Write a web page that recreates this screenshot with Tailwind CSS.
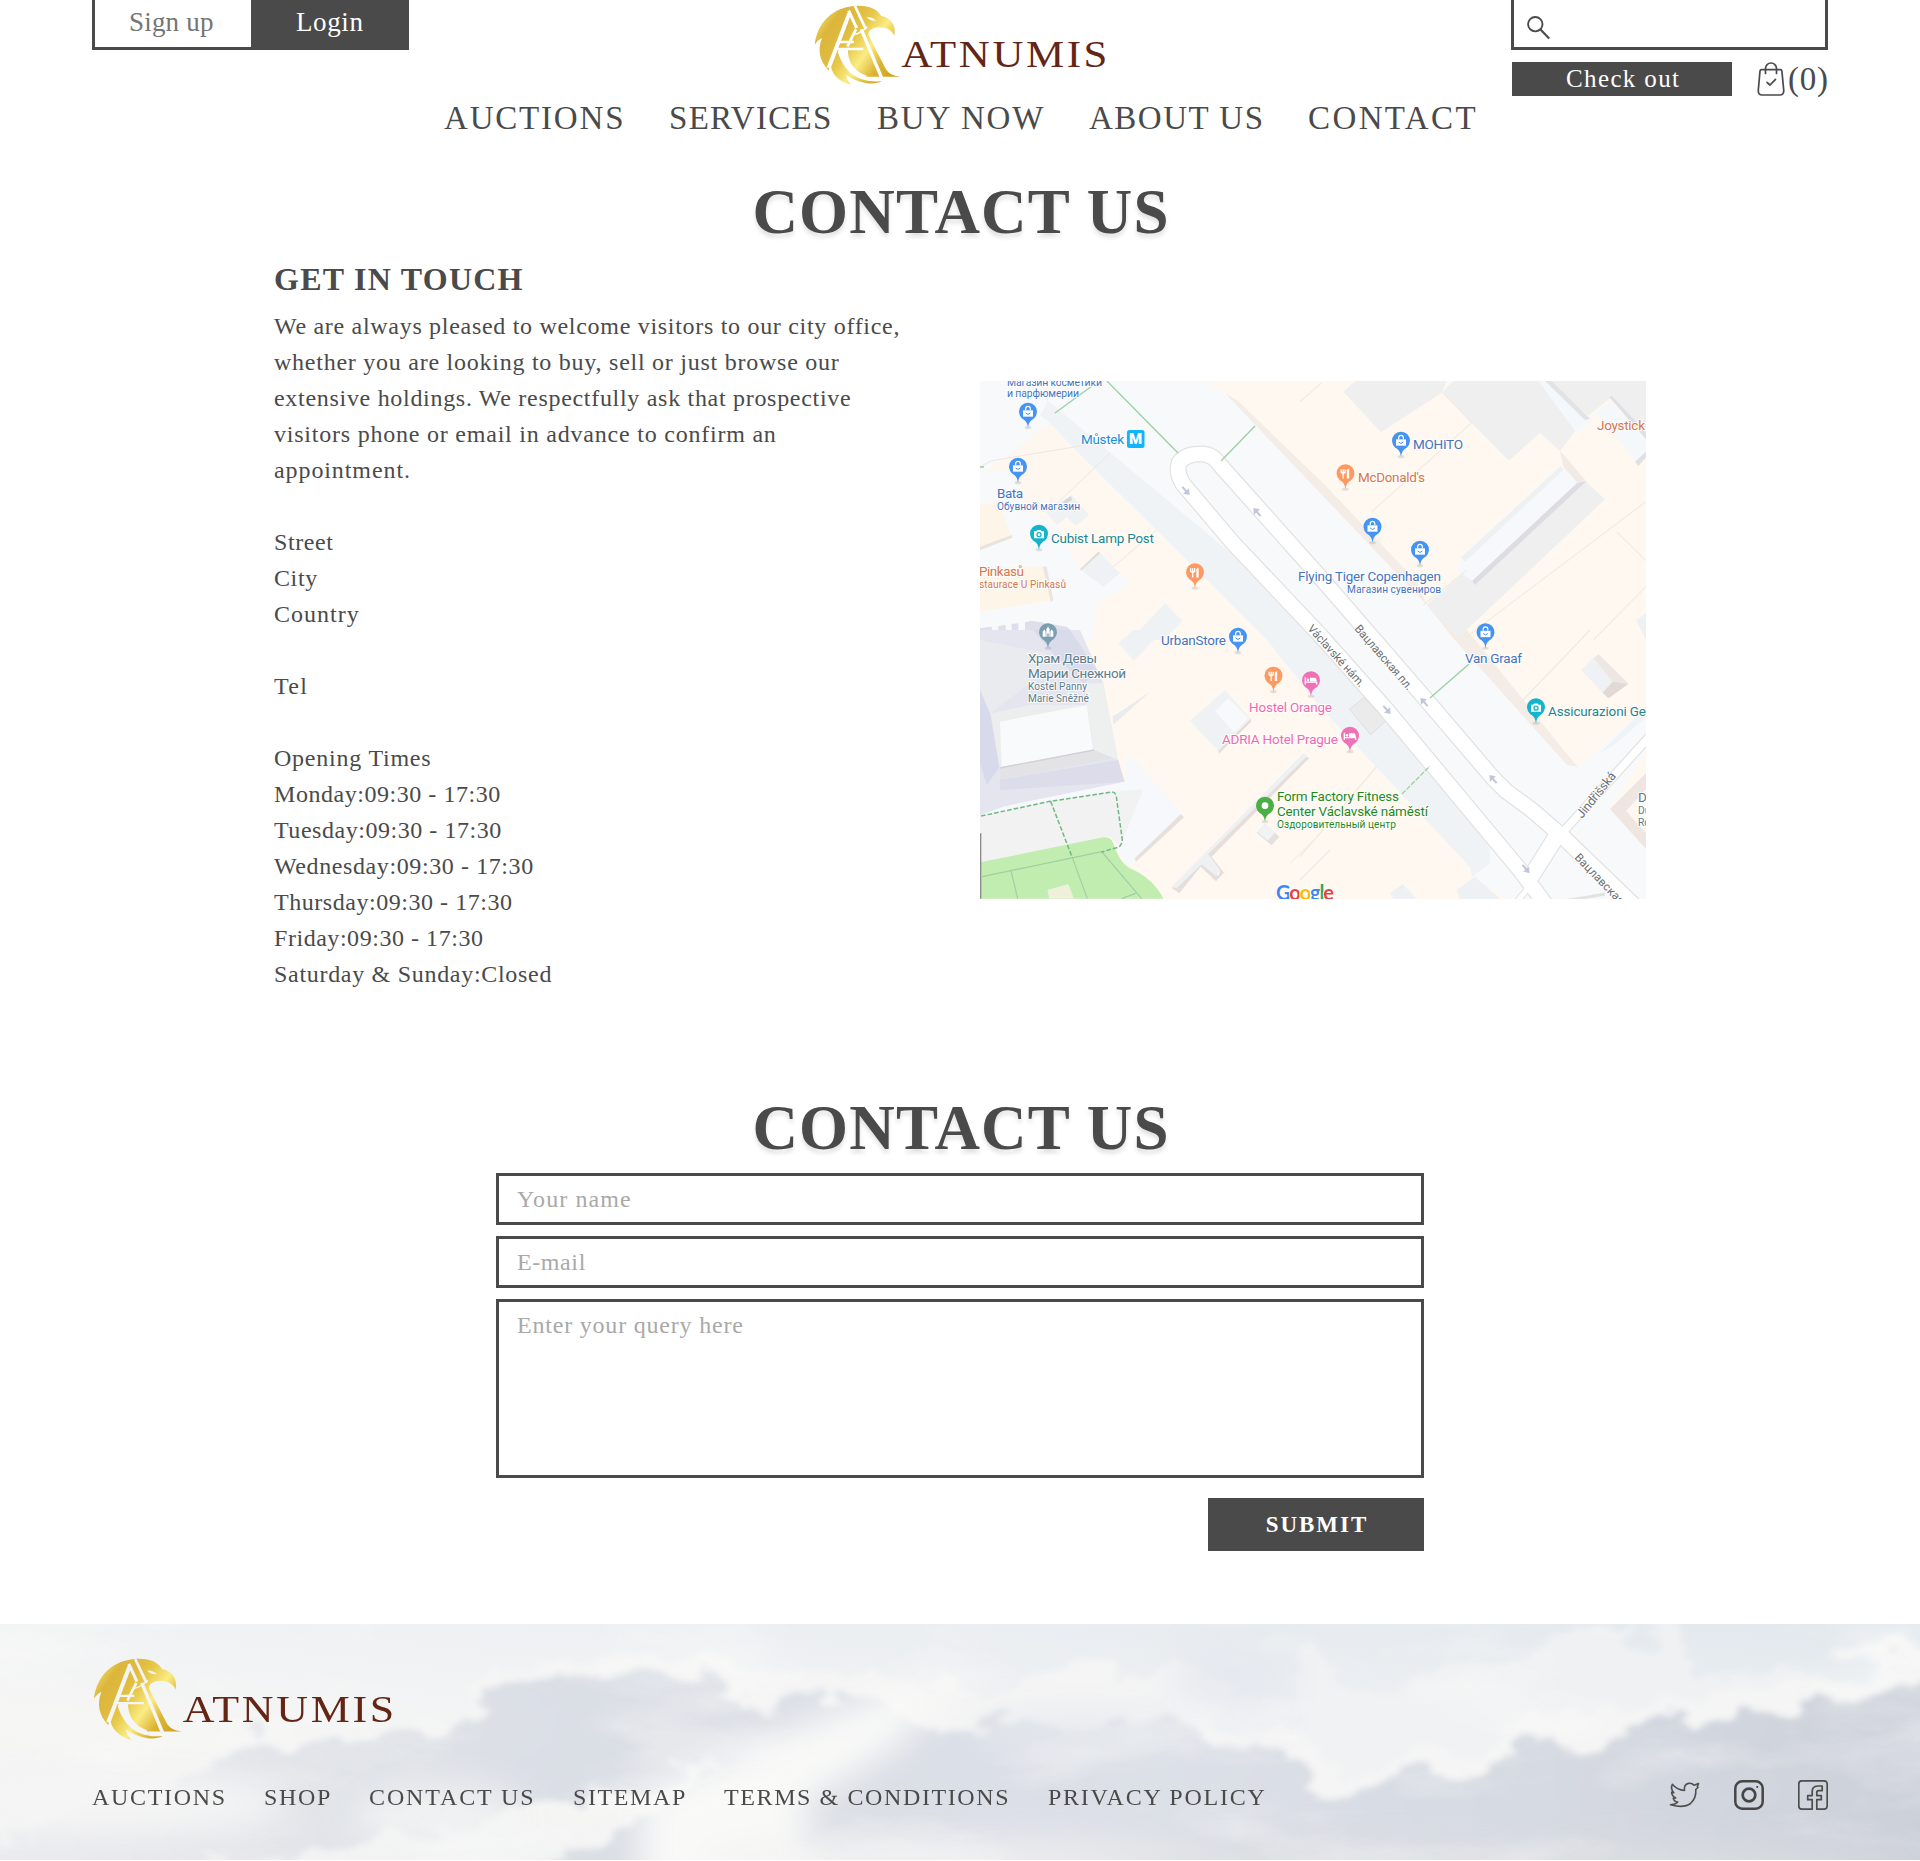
<!DOCTYPE html>
<html lang="en">
<head>
<meta charset="utf-8">
<title>Atnumis – Contact us</title>
<script src="https://cdn.jsdelivr.net/npm/@tailwindcss/browser@4"></script>
</head>
<body class="bg-white text-[#4a4a4a] font-['Liberation_Serif',serif]">

<!-- shared symbols -->
<svg class="absolute h-0 w-0" aria-hidden="true">
  <defs>
    <linearGradient id="gold" gradientUnits="userSpaceOnUse" x1="50" y1="60" x2="290" y2="230">
      <stop offset="0" stop-color="#f0d860"/><stop offset=".14" stop-color="#dcb63c"/><stop offset=".3" stop-color="#dfba40"/>
      <stop offset=".42" stop-color="#e6c748"/><stop offset=".6" stop-color="#faec84"/><stop offset=".78" stop-color="#dcb433"/><stop offset="1" stop-color="#cda01e"/>
    </linearGradient>
    <mask id="cut" maskUnits="userSpaceOnUse" x="30" y="0" width="290" height="270">
      <rect x="30" y="0" width="290" height="270" fill="#fff"/>
      <g fill="none" stroke="#000">
        <path d="M163 18 L196 88" stroke-width="8"/>
        <path d="M144 32 L168 84" stroke-width="9"/>
        <path d="M182 88 L244 236" stroke-width="10"/>
        <path d="M146 40 L84 204" stroke-width="12"/>
        <path d="M166 88 L140 140" stroke-width="8"/>
        <path d="M118 126 L160 126 M104 147 L188 147" stroke-width="7"/>
        <path d="M136 146 C136 190 156 218 196 232" stroke-width="11"/>
        <path d="M160 104 Q180 100 200 80" stroke-width="4"/>
      </g>
      <path d="M198 52 Q214 50 226 62 Q210 64 198 52 Z" fill="#000"/>
    </mask>
    <symbol id="logo" viewBox="40 12 880 246">
      <g mask="url(#cut)" fill="url(#gold)">
        <path d="M146 20 C175 13 226 16 242 48 C262 50 290 72 281 107 C272 84 240 76 216 86 C206 90 202 96 204 106 L254 204 C262 220 278 228 299 230 L190 230 C165 220 150 205 138 178 L138 146 L118 146 C104 165 90 185 84 212 C56 182 50 150 64 114 C54 118 48 126 42 134 C50 66 96 28 146 20 Z"/>
        <path d="M108 146 C124 195 150 250 243 244 C222 256 176 252 136 224 C138 238 144 248 153 254 C112 246 84 216 92 180 Z"/>
      </g>
      <text transform="translate(302 202) scale(1.13 1)" font-family="'Liberation Serif',serif" font-size="114" fill="#642515" textLength="548">ATNUMIS</text>
    </symbol>

    <symbol id="drop" viewBox="-30 -30 60 82" overflow="visible">
      <ellipse cx="0" cy="47" rx="10" ry="5" fill="#000" opacity=".1"/>
      <path d="M0 47 C-3 30 -6 27 -17 20 A27 27 0 1 1 17 20 C6 27 3 30 0 47 Z"/>
    </symbol>
    <g id="pin-shop"><use href="#drop" x="-30" y="-30" width="60" height="82" fill="#4593f3"/><path d="M-15 -5 H15 V14 H-15 Z" fill="#fff"/><path d="M-7 -5 V-10 A7 7 0 0 1 7 -10 V-5" fill="none" stroke="#fff" stroke-width="3.5"/><path d="M-7 3 Q0 12 7 3" fill="none" stroke="#4593f3" stroke-width="3"/></g>
    <g id="pin-food"><use href="#drop" x="-30" y="-30" width="60" height="82" fill="#fd9962"/><path d="M-13 -13 V-4 Q-7 2 -1 -4 V-13 M-7 -13 V15" fill="none" stroke="#fff" stroke-width="4"/><path d="M4 15 V-10 Q10 -18 11 -10 V15 Z" fill="#fff"/></g>
    <g id="pin-bed"><use href="#drop" x="-30" y="-30" width="60" height="82" fill="#f072b6"/><path d="M-17 -10 V12 M17 12 V4 M-17 5 H17" fill="none" stroke="#fff" stroke-width="4"/><circle cx="-9" cy="-2" r="4" fill="#fff"/><path d="M-3 3 V-8 H12 Q17 -8 17 3 Z" fill="#fff"/></g>
    <g id="pin-photo"><use href="#drop" x="-30" y="-30" width="60" height="82" fill="#12b5cb"/><path d="M-15 -8 H-9 L-5 -12 H5 L8 -8 H15 V13 H-15 Z" fill="#fff"/><circle cx="0" cy="2" r="6" fill="none" stroke="#12b5cb" stroke-width="4"/></g>
    <g id="pin-church"><use href="#drop" x="-30" y="-30" width="60" height="82" fill="#7b9eb0"/><path d="M-16 13 V-3 L-11 -9 L-7 -3 V13 Z M-5 13 V-10 L0 -18 L5 -10 V13 H2 V3 H-2 V13 Z M7 13 V-3 L11 -9 L16 -3 V13 Z" fill="#fff"/></g>
    <g id="pin-dot"><use href="#drop" x="-30" y="-30" width="60" height="82" fill="#4caf45"/><circle cx="0" cy="-1" r="10" fill="#fff"/></g>
    <path id="oneway" d="M-5.5 -1 H0 V-4 L5.5 0 L0 4 V1 H-5.5 Z" fill="#c2c6dd"/>
  </defs>
</svg>

<header class="flex h-[98px] items-start justify-between px-[92px]">
  <div class="flex h-[50px] w-[317px] border-x-3 border-b-3 border-[#4a4a4a] text-[27px] leading-[44px]">
    <a class="w-[156px] pl-[34px] tracking-[0.2px] text-[#757575]">Sign up</a>
    <a class="flex-1 bg-[#4a4a4a] pl-[45px] tracking-[0.6px] text-white">Login</a>
  </div>
  <svg class="mt-1 ml-[1px] h-[82px] w-[293px]"><use href="#logo"/></svg>
  <div class="w-[317px]">
    <div class="h-[50px] border-x-3 border-b-3 border-[#4a4a4a] pt-4 pl-[13px]">
      <svg class="h-6 w-6" viewBox="0 0 24 24" fill="none" stroke="#4a4a4a" stroke-width="1.9"><circle cx="8.3" cy="8.2" r="7.2"/><path d="M13.5 13.5 L22.2 22.6" stroke-width="2.1"/></svg>
    </div>
    <div class="mt-3 flex h-[34px] items-center pl-[1px]">
      <a class="h-[34px] w-[220px] shrink-0 bg-[#4a4a4a] pl-[54px] text-[25px] leading-[33px] tracking-[1.37px] text-white">Check out</a>
      <svg class="ml-[25px] h-[34px] w-[28px] shrink-0" viewBox="0 0 28 34" fill="none" stroke="#4a4a4a" stroke-width="1.7" stroke-linecap="round" stroke-linejoin="round"><path d="M4.5 7.7 H23.3 Q24.7 7.7 24.9 9.2 L26.7 28 Q27 33 22.8 33 H5.2 Q1 33 1.3 28 L3 9.2 Q3.2 7.7 4.5 7.7 Z"/><path d="M8.5 11.5 V6.5 A5.5 5.5 0 0 1 19.5 6.5 V11.5"/><path d="M10 20.3 L13 23 L18.5 17.3"/></svg>
      <span class="ml-[3px] text-[33px] leading-[32px] tracking-[0.8px]">(0)</span>
    </div>
  </div>
</header>

<nav class="flex pl-[444px] text-[33px] leading-10">
  <a class="w-[225px] tracking-[1.81px]">AUCTIONS</a>
  <a class="w-[208px] tracking-[1.3px]">SERVICES</a>
  <a class="w-[212px] tracking-[1.8px]">BUY NOW</a>
  <a class="w-[219px] tracking-[1.5px]">ABOUT US</a>
  <a class="tracking-[2.4px]">CONTACT</a>
</nav>

<main>
  <h1 class="mt-[34px] pl-[2px] text-center text-[63px] leading-20 font-bold tracking-[1.17px] [text-shadow:0_4px_4px_rgba(0,0,0,0.12)]">CONTACT US</h1>

  <section class="mt-[7px] flex px-[274px]">
    <div class="w-[706px]">
      <h2 class="text-[32px] leading-10 font-bold tracking-[1.25px]">GET IN TOUCH</h2>
      <div class="mt-[9px] -mb-px text-2xl leading-9 whitespace-nowrap">
        <p class="tracking-[0.7px]">We are always pleased to welcome visitors to our city office,</p>
        <p class="tracking-[0.75px]">whether you are looking to buy, sell or just browse our</p>
        <p class="tracking-[0.7px]">extensive holdings. We respectfully ask that prospective</p>
        <p class="tracking-[0.78px]">visitors phone or email in advance to confirm an</p>
        <p class="tracking-[0.91px]">appointment.</p>
        <div class="mt-9 tracking-[0.6px]">
          <p>Street</p>
          <p>City</p>
          <p class="tracking-[1px]">Country</p>
        </div>
        <p class="mt-9 tracking-[1.3px]">Tel</p>
        <div class="mt-9 tracking-[0.54px]">
          <p class="tracking-[0.77px]">Opening Times</p>
          <p>Monday:09:30 - 17:30</p>
          <p>Tuesday:09:30 - 17:30</p>
          <p class="tracking-[0.6px]">Wednesday:09:30 - 17:30</p>
          <p>Thursday:09:30 - 17:30</p>
          <p>Friday:09:30 - 17:30</p>
          <p class="tracking-[0.7px]">Saturday &amp; Sunday:Closed</p>
        </div>
      </div>
    </div>

    <svg class="mt-[122px] h-[518px] w-[666px] shrink-0" viewBox="0 0 666 518" font-family="Roboto, sans-serif">
      <rect width="666" height="518" fill="#fef8f1"/>

      <!-- square and side streets -->
      <path d="M108 0 H223 L248 14 L340 112 L447 224 L473 257 L587 384 L598 386 L666 326 V370 L630 428 L666 468 V518 H528 L492 496 L497 482 L340 326 L287 259 L230 202 L67 42 L30 0 Z" fill="#f7f9fb"/>
      <path d="M67 19 L223 149 L280 196 L450 382 L510 468 V482 L492 496 L490 486 L340 326 L287 259 L230 202 L60 34 Z" fill="#f0f3f5"/>
      <path d="M0 0 H40 L67 22 L60 34 L70 42 L0 96 Z" fill="#f7f9fb"/>
      <path d="M0 95 L70 42 L120 95 L60 130 L20 110 Z" fill="#fdf7ef"/>
      <path d="M245 12 L258 20 L345 104 L436 200 L447 224 L340 112 Z" fill="#f4ece6"/>
      <path d="M447 224 L470 228 L586 372 L598 386 L587 384 L473 257 Z" fill="#f4ece6"/>
      <path d="M630 428 L666 392 V468 Z" fill="#efe6e2"/>
      <path d="M666 408 L646 430 L666 452 Z" fill="#fef8f1"/>
      <path d="M620 372 L666 326 V336 L634 364 Z" fill="#eef3f6"/>
      <path d="M480 512 L496 498 L520 518 H480 Z" fill="#eef1f4"/>

      <!-- blocks in the upper right -->
      <g transform="translate(320 -11) scale(.33333)">
        <path d="M130 65 L165 33 H440 L425 68 L243 187 Z M425 68 L460 33 H730 L855 145 L780 243 L720 188 L627 272 Z M740 33 H1038 V180 L930 85 L855 145 Z" fill="#efefef"/>
        <path d="M715 33 H745 L880 150 L828 187 Z" fill="#f5f8fb"/><path d="M735 33 H755 L870 146 L855 150 Z" fill="#e3e3e5"/>
        <path d="M885 130 L930 92 L1038 210 V250 L1010 275 Z" fill="#f5f8fb"/><path d="M928 82 L936 78 L1038 186 V208 Z M1005 275 L1038 245 V262 L1015 288 Z" fill="#dfe0e4"/>
        <path d="M855 333 L915 388 L475 803 L380 705 L500 600 L530 640 Z" fill="#efefef"/>
        <path d="M782 288 L832 338 L520 635 L472 600 L485 560 Z" fill="#f6f8fc"/><path d="M782 288 L484 562 L495 575 L790 300 Z" fill="#eef1f4"/>
        <path d="M832 338 L860 333 L525 645 L517 632 Z" fill="#dddce2"/>
        <path d="M780 243 L790 290 L832 338 L858 333 L800 265 Z" fill="#f2ebe5"/>
        <path d="M0 95 L65 38 M215 425 L515 158 L430 68 M500 800 L1038 395 M880 810 L1038 650 M950 485 L1038 572 M370 705 L500 600" fill="none" stroke="#f2ece5" stroke-width="4"/>
        <path d="M1008 750 L1038 730 V810 Z" fill="#eef1f4"/>
      </g>

      <!-- buildings in the upper left -->
      <g transform="translate(-10 -11) scale(.33333)">
        <path d="M30 310 L120 300 L180 430 L260 465 L330 600 L385 545 L480 640 L380 700 L370 810 H30 Z" fill="#f7f9fb"/>
        <path d="M30 405 L85 395 L125 500 L30 540 Z" fill="#fdf5e8"/><path d="M30 530 L125 495 L127 503 L30 541 Z" fill="#e9e3dd"/>
        <path d="M225 425 L305 375 L357 435 L318 468 L290 440 L262 465 Z" fill="#eff2f4"/><path d="M278 395 L303 378 L306 390 L285 402 Z" fill="#dad7d6"/>
        <path d="M30 590 L220 590 L248 690 L30 725 Z" fill="#fdf5e8"/><path d="M218 590 L230 590 L250 690 L243 697 Z" fill="#eae5e0"/>
        <path d="M330 598 L386 545 L450 610 L400 650 Z" fill="#eff2f4"/><path d="M328 600 L386 544 L390 550 L335 600 Z" fill="#e1deda"/>
        <path d="M480 810 L585 700 L637 752 L580 810 Z" fill="#eff2f4"/>
        <path d="M30 290 L65 272 M65 272 L350 225 M240 420 L420 250 M430 590 L560 480" fill="none" stroke="#ebe7e2" stroke-width="3"/>
        <path d="M30 775 L65 770 L65 795 L85 792 V768 L107 765 V790 L125 788 V762 L145 760 V785 L165 782 V757 L185 752 L290 770 L340 810 H30 Z" fill="#dedfea"/>
      </g>

      <!-- church and park -->
      <g transform="translate(-10 249) scale(.33333)">
        <path d="M30 0 H330 L400 160 L440 380 L465 455 L100 530 L30 560 Z" fill="#e4e5ee"/>
        <path d="M30 30 L230 70 L180 160 L60 250 L30 180 Z" fill="#eaebef"/>
        <path d="M190 0 H300 L385 130 L340 160 L240 60 Z" fill="#d9daea"/>
        <path d="M30 180 L60 250 L90 410 L50 465 L30 400 Z" fill="#d8daeb"/>
        <path d="M345 160 L400 160 L445 390 L372 360 L350 225 Z" fill="#eef0ef"/>
        <path d="M70 275 L350 225 L370 360 L90 412 Z" fill="#f9fafc"/><path d="M62 250 L180 225 L350 225 L90 275 L95 410 L88 412 Z" fill="#eceded"/>
        <path d="M90 412 L372 360 L430 385 L90 450 Z" fill="#e3e3e6"/><path d="M90 450 L445 390 L462 455 L90 480 Z" fill="#dcdcea"/>
        <path d="M90 414 L372 360" stroke="#d2d2d6" stroke-width="4"/>
        <path d="M465 382 L490 385 L640 555 L495 690 L470 715 L430 625 L30 700 V555 L100 530 L465 455 Z" fill="#f6f8fb"/>
        <path d="M30 560 L240 515 L430 485 L520 478 L450 650 L420 620 L30 700 Z" fill="#f2f2f3"/>
        <path d="M495 685 L632 553 L642 562 L497 696 Z" fill="#e7dfdb"/>
        <path d="M30 697 L400 622 Q422 618 430 640 Q450 700 480 715 Q550 745 580 806 H30 Z" fill="#c1edb0"/>
        <path d="M232 780 L295 762 L312 806 H238 Z" fill="#eff0db"/>
        <path d="M36 740 L395 665 L515 806 M307 683 L352 806 M123 722 L143 806 M455 806 L497 790" fill="none" stroke="#9fcfa3" stroke-width="3.5"/>
        <path d="M33 558 L240 514 L425 486 Q437 486 439 500 L457 630 Q455 650 440 653 L395 666 M242 514 L307 683" fill="none" stroke="#6fb981" stroke-width="4.5" stroke-dasharray="14 6"/>
        <path d="M32 610 V806" stroke="#8b8b8b" stroke-width="4"/>
        <path d="M428 260 L540 185 L430 284 Z" fill="#e9ebee"/>
        <path d="M445 40 L490 0 H580 L492 92 Z" fill="#eff2f4"/>
        <path d="M660 272 L765 180 L840 265 L745 362 Z" fill="#eff2f4"/><path d="M735 243 L775 205 L835 265 L793 308 Z" fill="#f7f9fb"/><path d="M745 362 L843 265 V275 L747 371 Z" fill="#e5ddd9"/>
        <path d="M1005 378 L1018 384 L725 680 L762 728 L738 754 L692 710 L628 790 L605 774 L700 695 L745 738 L750 725 L708 672 Z" fill="#e6dedb"/><path d="M1000 370 L1012 378 L715 672 L750 720 L738 738 L695 703 L620 775 L605 770 Z" fill="#eef0f2"/>
        <path d="M860 608 L885 582 L928 620 L905 646 Z" fill="#e5dfdd"/><path d="M862 605 L885 582 L915 608 L893 632 Z" fill="#f0f2f4"/>
        <path d="M960 700 L1050 612" stroke="#efe9e2" stroke-width="3"/>
      </g>

      <!-- buildings in the lower right -->
      <g transform="translate(320 249) scale(.33333)">
        <path d="M845 120 L895 72 L985 160 L925 205 Z" fill="#ede6e2"/><path d="M845 120 L880 82 L938 155 L908 188 Z" fill="#eff2f4"/><path d="M908 188 L938 155 L985 162 L925 205 Z" fill="#e1d9d6"/>
        <path d="M660 220 L870 0 M0 680 L230 410 M0 750 L90 660" fill="none" stroke="#efe9e2" stroke-width="4"/>
        <path d="M148 238 L192 203 L258 272 L212 314 Z" fill="#ebebec" stroke="#dedede" stroke-width="3"/>
        <path d="M470 780 L525 740 L600 806 H480 Z" fill="#eef1f4"/>
        <path d="M270 790 L308 762 L350 806 H280 Z" fill="#eef1f4"/>
      </g>

      <!-- roads -->
      <g fill="none" stroke-linejoin="round">
        <g stroke="#e2e2e3">
          <path d="M670 355 L583 451" stroke-width="10"/>
          <path d="M536 522 L556 497" stroke-width="7"/>
          <path d="M560 522 Q590 520 625 513" stroke-width="3"/>
          <path d="M578 453 L547 502" stroke-width="18"/>
          <path d="M566 524 L540 489 L405 327 L340 254 L253 162 L203 103 Q196 92 199 82 Q205 73 220 73 Q232 72 240 84 L340 196 L443 315 L513 397 L526 410 L553 430 L583 456 L660 530" stroke-width="17"/>
        </g>
        <g stroke="#fff">
          <path d="M670 355 L583 451" stroke-width="7.5"/>
          <path d="M536 522 L556 497" stroke-width="5"/>
          <path d="M578 453 L547 502" stroke-width="15.5"/>
          <path d="M566 524 L540 489 L405 327 L340 254 L253 162 L203 103 Q196 92 199 82 Q205 73 220 73 Q232 72 240 84 L340 196 L443 315 L513 397 L526 410 L553 430 L583 456 L660 530" stroke-width="14.5"/>
        </g>
        <g stroke="#9bd0a4" stroke-width="1.3">
          <path d="M127 0 L198 72 M275 45 L241 80 M0 86 L4 86 M112 5 L75 32"/><path d="M450 317 L489 283"/>
          <path d="M422 413 L450 385" stroke-dasharray="5 1.5"/>
        </g>
      </g>
      <use href="#oneway" transform="translate(206 110) rotate(48)"/>
      <use href="#oneway" transform="translate(277 131) rotate(228)"/>
      <use href="#oneway" transform="translate(407 329) rotate(48)"/>
      <use href="#oneway" transform="translate(444 321) rotate(228)"/>
      <use href="#oneway" transform="translate(513 398) rotate(228)"/>
      <use href="#oneway" transform="translate(546 488) rotate(50)"/>

      <!-- pins -->
      <use href="#pin-shop" transform="translate(48 31) scale(.333)"/>
      <use href="#pin-shop" transform="translate(38 86) scale(.333)"/>
      <use href="#pin-photo" transform="translate(59 153) scale(.333)"/>
      <use href="#pin-food" transform="translate(215 191.500) scale(.333)"/>
      <use href="#pin-church" transform="translate(68 251.500) scale(.333)"/>
      <use href="#pin-shop" transform="translate(258 256) scale(.333)"/>
      <use href="#pin-shop" transform="translate(421 60) scale(.333)"/>
      <use href="#pin-food" transform="translate(365.500 92.500) scale(.333)"/>
      <use href="#pin-shop" transform="translate(392.500 146) scale(.333)"/>
      <use href="#pin-shop" transform="translate(440 169) scale(.333)"/>
      <use href="#pin-shop" transform="translate(505.500 251.500) scale(.333)"/>
      <use href="#pin-food" transform="translate(293.500 295) scale(.333)"/>
      <use href="#pin-bed" transform="translate(331 299.500) scale(.333)"/>
      <use href="#pin-dot" transform="translate(285 425) scale(.333)"/>
      <use href="#pin-bed" transform="translate(370 355) scale(.333)"/>
      <use href="#pin-photo" transform="translate(556 326.500) scale(.333)"/>
      <rect x="147" y="49" width="17.5" height="18" rx="2.5" fill="#10b6fb"/>
      <text x="149" y="63.200" font-size="15" font-weight="900" fill="#fff">M</text>

      <!-- labels -->
      <g font-size="13.500" stroke="#fff" stroke-width="2" stroke-opacity=".75" paint-order="stroke">
        <g fill="#4574bd">
          <text x="27" y="4.5" font-size="10.500" textLength="95">Магазин косметики</text>
          <text x="27" y="16" font-size="10.500" textLength="72">и парфюмерии</text>
          <text x="17" y="116.500" textLength="26">Bata</text>
          <text x="17" y="128.500" font-size="10.200" textLength="83">Обувной магазин</text>
          <text x="181" y="264" textLength="65">UrbanStore</text>
          <text x="433" y="67.500" textLength="50">MOHITO</text>
          <text x="318" y="199.500" textLength="143">Flying Tiger Copenhagen</text>
          <text x="367" y="212" font-size="10.200" textLength="94">Магазин сувениров</text>
          <text x="485" y="281.500" textLength="57">Van Graaf</text>
        </g>
        <text x="101" y="63" fill="#1a8fd6" textLength="43">Můstek</text>
        <g fill="#22868f">
          <text x="71" y="161.500" textLength="103">Cubist Lamp Post</text>
          <text x="568" y="334.500" textLength="98">Assicurazioni Ge</text>
        </g>
        <g fill="#d5764c">
          <text x="-1" y="195" textLength="45">Pinkasů</text>
          <text x="-1" y="207" font-size="10.200" textLength="87">staurace U Pinkasů</text>
          <text x="378" y="100.500" textLength="67">McDonald's</text>
          <text x="617" y="49" textLength="48">Joystick</text>
        </g>
        <g fill="#5d7c8b">
          <text x="48" y="282" textLength="69">Храм Девы</text>
          <text x="48" y="297" textLength="98">Марии Снежной</text>
          <text x="48" y="309" font-size="10.200" textLength="59">Kostel Panny</text>
          <text x="48" y="321" font-size="10.200" textLength="61">Marie Sněžné</text>
          <text x="658" y="421">D</text>
          <text x="658" y="433" font-size="10.200">Du</text>
          <text x="658" y="445" font-size="10.200">Ro</text>
        </g>
        <g fill="#ee6bb2">
          <text x="269" y="330.500" textLength="83">Hostel Orange</text>
          <text x="242" y="363" textLength="116">ADRIA Hotel Prague</text>
        </g>
        <g fill="#1f8a24">
          <text x="297" y="419.500" textLength="122">Form Factory Fitness</text>
          <text x="297" y="434.500" textLength="151">Center Václavské náměstí</text>
          <text x="297" y="446.500" font-size="10.200" textLength="119">Оздоровительный центр</text>
        </g>
        <g fill="#6b6f73" font-size="11.500">
          <text transform="translate(327 248) rotate(48)" textLength="79">Václavské нám.</text>
          <text transform="translate(374 248) rotate(49)" textLength="82">Вацлавская пл.</text>
          <text transform="translate(594 477) rotate(46)" textLength="66">Вацлавская</text>
          <text transform="translate(602 438) rotate(-51)" font-size="12.500" textLength="55">Jindřišská</text>
        </g>
      </g>
      <text x="296" y="519" font-family="Lato, sans-serif" font-size="20" font-weight="700" stroke="#fff" stroke-width="2" paint-order="stroke" textLength="58"><tspan fill="#4285f4">G</tspan><tspan fill="#ea4335">o</tspan><tspan fill="#fbbc05">o</tspan><tspan fill="#4285f4">g</tspan><tspan fill="#34a853">l</tspan><tspan fill="#ea4335">e</tspan></text>
    </svg>
  </section>

  <section class="mt-[97px]">
    <h2 class="pl-[2px] text-center text-[63px] leading-20 font-bold tracking-[1.17px] [text-shadow:0_4px_4px_rgba(0,0,0,0.12)]">CONTACT US</h2>
    <form class="mx-auto mt-[5px] flex w-[928px] flex-col gap-[11px] text-2xl">
      <input type="text" placeholder="Your name" class="h-[52px] border-3 border-[#4a4a4a] px-[18px] tracking-[1.1px] placeholder:text-[#a9a9a9]">
      <input type="text" placeholder="E-mail" class="h-[52px] border-3 border-[#4a4a4a] px-[18px] tracking-[0.6px] placeholder:text-[#a9a9a9]">
      <textarea placeholder="Enter your query here" class="h-[179px] resize-none border-3 border-[#4a4a4a] px-[18px] pt-[5px] leading-9 tracking-[0.8px] placeholder:text-[#a9a9a9]"></textarea>
      <button type="button" class="mt-[9px] h-[53px] w-[216px] self-end bg-[#4a4a4a] pt-[2px] pl-[2px] text-[23px] font-bold tracking-[2px] text-white">SUBMIT</button>
    </form>
  </section>
</main>

<footer class="mt-[73px] grid h-[236px] overflow-hidden bg-[#f3f4f5]">
  <!-- cloudy sky -->
  <svg class="col-start-1 row-start-1 h-[236px] w-full" viewBox="0 0 1920 236" preserveAspectRatio="none" aria-hidden="true">
    <defs>
      <linearGradient id="sky" x1="0" x2="1" y1="1" y2="0"><stop offset="0" stop-color="#f1f2f3"/><stop offset=".3" stop-color="#f6f6f5"/><stop offset=".6" stop-color="#eff1f3"/><stop offset="1" stop-color="#e2e8ee"/></linearGradient>
      <linearGradient id="mass" x1="0" x2="1"><stop offset="0" stop-color="#ebecef"/><stop offset=".2" stop-color="#e0e3e8"/><stop offset=".3" stop-color="#dadee5"/><stop offset=".6" stop-color="#dce0e7"/><stop offset=".8" stop-color="#d5d9e1"/><stop offset="1" stop-color="#cbcfd8"/></linearGradient>
      <filter id="puff" x="-5%" y="-20%" width="110%" height="140%"><feTurbulence type="fractalNoise" baseFrequency=".016 .026" numOctaves="5" seed="11"/><feDisplacementMap in="SourceGraphic" scale="70" xChannelSelector="R" yChannelSelector="G"/><feGaussianBlur stdDeviation="3"/></filter>
      <filter id="haze" x="0" y="0" width="100%" height="100%"><feTurbulence type="fractalNoise" baseFrequency=".005 .014" numOctaves="5" seed="4"/><feColorMatrix values="0 0 0 0 .98  0 0 0 0 .98  0 0 0 0 .97  3.4 0 0 0 -1.6"/></filter>
      <filter id="soft" x="-30%" y="-30%" width="160%" height="160%"><feGaussianBlur stdDeviation="18"/></filter>
    </defs>
    <rect width="1920" height="236" fill="url(#sky)"/>
    <g filter="url(#puff)">
      <path d="M1300 20 L1320 12 L1350 40 L1400 70 L1440 45 L1480 55 L1560 20 L1600 0 L1680 10 L1700 60 L1760 40 L1820 50 L1960 20 V80 L1600 150 L1370 160 L1290 110 Z" fill="#f1f2f3" opacity=".85"/>
      <path d="M450 120 L470 80 L510 45 L570 30 L700 30 L770 60 L880 42 L960 75 L1060 50 L1190 45 L1240 100 L1300 112 L1360 150 L1440 130 L1600 92 L1760 62 L1980 20 V110 L1370 200 L900 150 L500 150 Z" fill="#f5f5f5"/>
      <path d="M-40 290 V230 L160 160 L250 122 L440 112 L490 70 L560 54 L690 52 L760 84 L860 66 L930 100 L1010 96 Z M450 290 L820 100 L1010 96 L1120 96 L1180 92 L1250 128 L1350 168 L1470 142 L1600 112 L1760 84 L1980 40 V290 Z" fill="url(#mass)"/>
    </g>
    <g filter="url(#soft)">
      <path d="M640 270 L640 170 L780 110 L960 40 L900 120 L800 180 L830 270 Z" fill="#f9f9f8"/>
      <ellipse cx="120" cy="180" rx="170" ry="30" fill="#f5f5f5"/>
      <ellipse cx="440" cy="195" rx="90" ry="36" fill="#f3f4f4" opacity=".8"/>
      <ellipse cx="960" cy="240" rx="260" ry="26" fill="#f0f0f0" opacity=".8"/>
      <ellipse cx="1500" cy="240" rx="420" ry="18" fill="#e0e1e2" opacity=".7"/>
      <ellipse cx="1230" cy="55" rx="60" ry="40" fill="#e5e9ef" opacity=".8"/>
      <ellipse cx="1080" cy="110" rx="110" ry="24" fill="#e5e8ed" opacity=".8"/>
    </g>
    <rect width="1920" height="236" filter="url(#haze)" opacity=".3"/>
  </svg>
  <div class="col-start-1 row-start-1 flex flex-col px-[92px] pt-[33px]">
    <svg class="h-[84px] w-[303px]"><use href="#logo"/></svg>
    <div class="mt-[38px] flex items-center justify-between">
      <nav class="flex text-2xl leading-9 whitespace-nowrap">
        <a class="w-[172px] tracking-[1.67px]">AUCTIONS</a>
        <a class="w-[105px] tracking-[1.7px]">SHOP</a>
        <a class="w-[204px] tracking-[1.88px]">CONTACT US</a>
        <a class="w-[151px] tracking-[1.6px]">SITEMAP</a>
        <a class="w-[324px] tracking-[1.6px]">TERMS &amp; CONDITIONS</a>
        <a class="tracking-[1.75px]">PRIVACY POLICY</a>
      </nav>
      <div class="flex items-center gap-[34px] pb-1">
        <svg class="h-[30px] w-[31px]" viewBox="0 0 31 30" fill="none" stroke="#4f4f50" stroke-width="1.6" stroke-linejoin="round"><path d="M3.300 4.300 Q8 10 15.500 10.500 Q14.500 4.500 19.500 3.400 Q23 2.800 25 5.200 L29.500 3.600 L28.300 6.500 L29 7.500 L26.800 9.500 Q27.500 18 21.500 23.500 Q15 28.500 1.500 24.800 Q6.500 24.500 8.800 22 Q5 21.500 4.300 18.300 L6.700 18 Q2.800 16 2.600 12.300 L4.800 12.800 Q1.300 9 3.300 4.300 Z"/></svg>
        <svg class="h-[30px] w-[30px]" viewBox="0 0 30 30" fill="none" stroke="#464647"><rect x="1.300" y="1.300" width="27.400" height="27.400" rx="7" stroke-width="2.500"/><circle cx="15" cy="15" r="6.300" stroke-width="2.700"/><circle cx="23.200" cy="7" r="1.100" fill="#464647" stroke="none"/></svg>
        <svg class="h-[30px] w-[30px]" viewBox="0 0 30 30" fill="none" stroke="#4c4c4d" stroke-width="1.700" stroke-linejoin="round"><path d="M14.200 29.200 H4 Q.8 29.200 .8 26 V4 Q.8 .8 4 .8 H26 Q29.200 .8 29.200 4 V26 Q29.200 29.200 26 29.200 H18.800 V19.700 H23.300 V15.600 H18.800 V12.300 Q18.800 10.600 20.500 10.600 H24.200 V6 H19.500 Q14.200 6.300 14.200 11.500 V15.600 H9.700 V19.700 H14.200 Z"/></svg>
      </div>
    </div>
  </div>
</footer>

</body>
</html>
